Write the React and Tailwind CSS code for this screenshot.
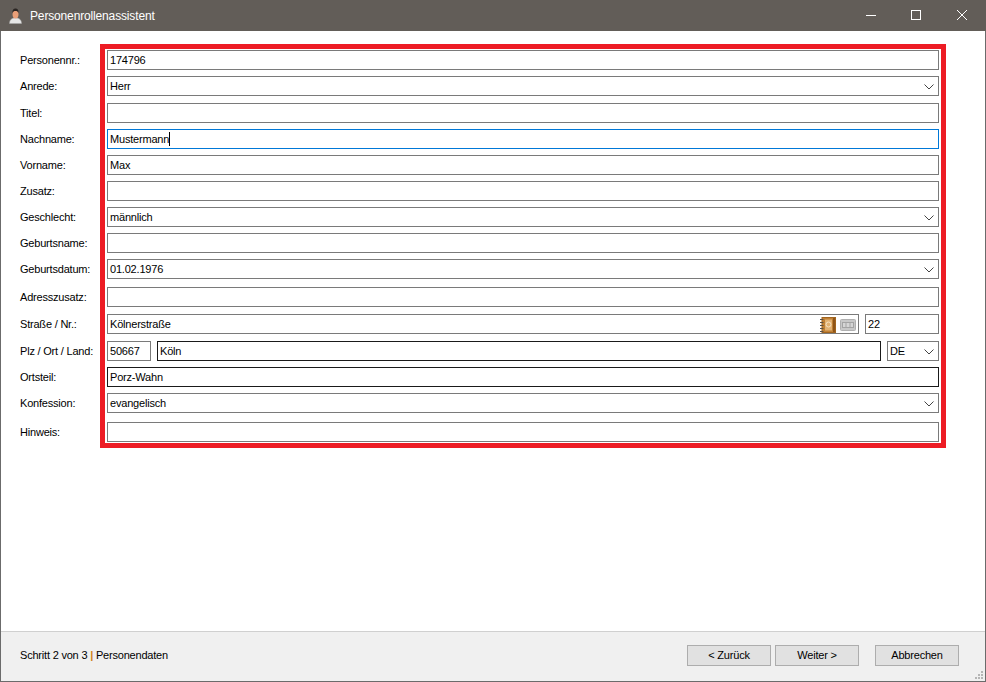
import React from 'react';

const rows = [
  { label: 'Personennr.:', mt: 'mt-[19px]', fields: [{ value: '174796', cls: 'flex-1' }] },
  { label: 'Anrede:', mt: 'mt-[6px]', fields: [{ value: 'Herr', cls: 'flex-1', select: true }] },
  { label: 'Titel:', mt: 'mt-[7px]', fields: [{ value: '', cls: 'flex-1' }] },
  { label: 'Nachname:', mt: 'mt-[6px]', fields: [{ value: 'Mustermann', cls: 'flex-1', color: 'border-[#0078d7]', caret: true }] },
  { label: 'Vorname:', mt: 'mt-[6px]', fields: [{ value: 'Max', cls: 'flex-1' }] },
  { label: 'Zusatz:', mt: 'mt-[6px]', fields: [{ value: '', cls: 'flex-1' }] },
  { label: 'Geschlecht:', mt: 'mt-[6px]', fields: [{ value: 'männlich', cls: 'flex-1', select: true }] },
  { label: 'Geburtsname:', mt: 'mt-[6px]', fields: [{ value: '', cls: 'flex-1' }] },
  { label: 'Geburtsdatum:', mt: 'mt-[6px]', fields: [{ value: '01.02.1976', cls: 'flex-1', select: true }] },
  { label: 'Adresszusatz:', mt: 'mt-[8px]', fields: [{ value: '', cls: 'flex-1' }] },
  {
    label: 'Straße / Nr.:',
    mt: 'mt-[7px]',
    fields: [
      { value: 'Kölnerstraße', cls: 'w-[752px]', icons: true },
      { value: '22', cls: 'ml-[6px] flex-1' },
    ],
  },
  {
    label: 'Plz / Ort / Land:',
    mt: 'mt-[7px]',
    fields: [
      { value: '50667', cls: 'w-[44px]' },
      { value: 'Köln', cls: 'ml-[6px] w-[724px]', color: 'border-[#1a1a1a]' },
      { value: 'DE', cls: 'ml-[6px] flex-1', select: true },
    ],
  },
  { label: 'Ortsteil:', mt: 'mt-[6px]', fields: [{ value: 'Porz-Wahn', cls: 'flex-1', color: 'border-[#1a1a1a]' }] },
  { label: 'Konfession:', mt: 'mt-[6px]', fields: [{ value: 'evangelisch', cls: 'flex-1', select: true }] },
  { label: 'Hinweis:', mt: 'mt-[9px]', fields: [{ value: '', cls: 'flex-1' }] },
];

function Chevron() {
  return (
    <svg width="10" height="6" viewBox="0 0 10 6" className="absolute right-[4px] top-[7px]" fill="none">
      <path d="M0.500 0.500 L5 5 L9.500 0.500" stroke="#444" strokeWidth="1" />
    </svg>
  );
}

function AddressBook() {
  return (
    <svg width="16" height="16" viewBox="0 0 16 16">
      <rect x="2" y="0.500" width="13.500" height="15" fill="#c58436" stroke="#a2651f" />
      <rect x="4.500" y="2" width="8" height="12" fill="#e2b273" stroke="#bd7f35" />
      <circle cx="8.500" cy="7.500" r="2.500" fill="none" stroke="#f7e3c3" />
      <rect x="13" y="1" width="2" height="14" fill="#8f5518" />
      <path d="M0 2.500h3.500M0 5.500h3.500M0 8.500h3.500M0 11.500h3.500M0 14.500h3.500" stroke="#5c5247" />
    </svg>
  );
}

function CardIcon() {
  return (
    <svg width="16" height="12" viewBox="0 0 16 12">
      <rect x="0.500" y="0.500" width="15" height="11" rx="1" fill="#c8c8c8" stroke="#b0b0b0" />
      <rect x="2.500" y="3.500" width="11" height="5" fill="#d6d6d6" stroke="#a4a4a4" />
      <path d="M6 4v4M10 4v4" stroke="#a4a4a4" />
    </svg>
  );
}

function Field({ value, cls, select, caret, icons, color = 'border-[#7a7a7a]' }) {
  return (
    <div className={`relative flex h-5 items-center border bg-white pl-[2px] ${color} ${cls}`}>
      <span>{value}</span>
      {caret && <span className="h-[14px] w-px bg-black" />}
      {select && <Chevron />}
      {icons && (
        <div className="absolute right-[2px] top-px flex h-full items-center gap-[4px]">
          <AddressBook />
          <CardIcon />
        </div>
      )}
    </div>
  );
}

function PersonIcon() {
  return (
    <svg width="13" height="16" viewBox="0 0 13 16">
      <path d="M0.500 15.500c0-3.500 2-5.500 6-5.500s6 2 6 5.500z" fill="#e6e6e6" stroke="#a9a9a9" strokeWidth="0.500" />
      <ellipse cx="6.500" cy="6" rx="3" ry="4.500" fill="#e99f78" />
      <path d="M3.500 5.500C3 1.500 5 0.500 6.500 0.500s3.500 1 3 5C9 3.500 8 3 6.500 3s-2.500 0.500-3 2.500z" fill="#2a2522" />
    </svg>
  );
}

function FooterButton({ children, cls = '' }) {
  return (
    <button className={`h-[21px] w-[84px] border border-[#adadad] bg-[#e1e1e1] text-black ${cls}`}>{children}</button>
  );
}

export default function App() {
  return (
    <div className="relative flex h-[682px] w-[986px] flex-col border border-t-0 border-[#6b6b6b] bg-white font-['Liberation_Sans',sans-serif] text-[11px] leading-none tracking-[-0.2px] text-black">
      <div className="-mx-px flex h-[31px] shrink-0 items-center bg-[#625d58] pl-[9px] text-[12px] tracking-[-0.15px] text-white">
        <PersonIcon />
        <span className="ml-[8px]">Personenrollenassistent</span>
        <svg width="101" height="12" viewBox="0 0 101 12" className="ml-auto mr-[19px]" fill="none" stroke="#fff">
          <path d="M0 5.500h10" />
          <rect x="45.500" y="0.500" width="9" height="9" />
          <path d="M91 0l10 10M101 0l-10 10" />
        </svg>
      </div>

      <div className="flex-1">
        {rows.map((row) => (
          <div key={row.label} className={`flex h-5 items-center pl-[19px] pr-[46px] ${row.mt}`}>
            <div className="w-[87px] shrink-0">{row.label}</div>
            <div className="flex flex-1">
              {row.fields.map((field, i) => (
                <Field key={i} {...field} />
              ))}
            </div>
          </div>
        ))}
      </div>

      {/* red annotation frame */}
      <div className="pointer-events-none absolute left-[99px] top-[44px] h-[404px] w-[846px] border-[5px] border-[#ed1c24]" />

      <div className="relative flex h-[50px] shrink-0 items-center border-t border-[#d0d0d0] bg-[#f0f0f0] pb-[2px] pl-[19px] pr-[26px]">
        <span>
          Schritt 2 von 3 <span className="font-bold text-[#cf7f1e]">|</span> Personendaten
        </span>
        <div className="ml-auto flex">
          <FooterButton>&lt; Zurück</FooterButton>
          <FooterButton cls="ml-[4px]">Weiter &gt;</FooterButton>
          <FooterButton cls="ml-[16px]">Abbrechen</FooterButton>
        </div>
        <svg width="10" height="10" viewBox="0 0 10 10" className="absolute bottom-[1px] right-[1px]" fill="#b5b5b5">
          <rect x="7" y="1" width="2" height="2" />
          <rect x="4" y="4" width="2" height="2" />
          <rect x="7" y="4" width="2" height="2" />
          <rect x="1" y="7" width="2" height="2" />
          <rect x="4" y="7" width="2" height="2" />
          <rect x="7" y="7" width="2" height="2" />
        </svg>
      </div>
    </div>
  );
}
